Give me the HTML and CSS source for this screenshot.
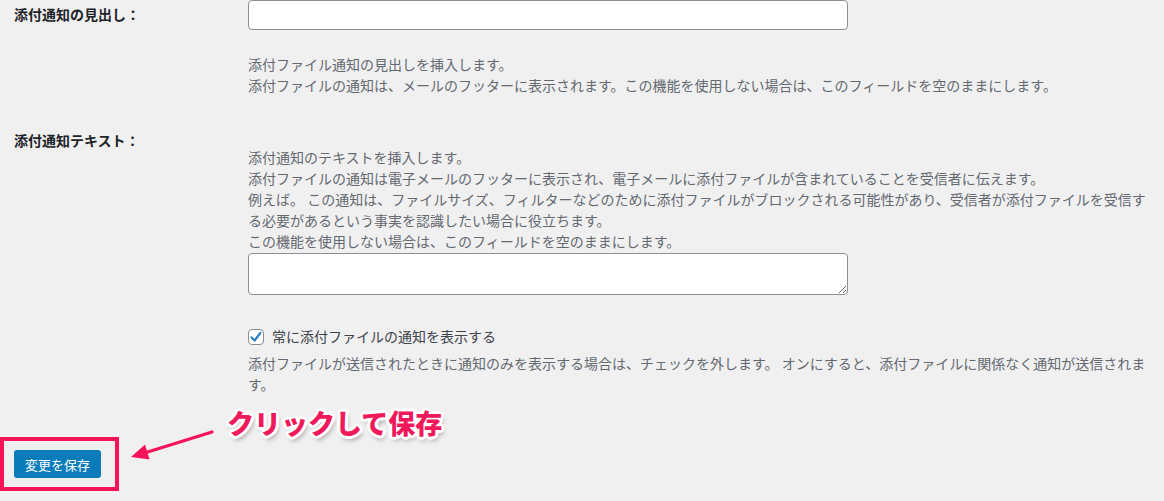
FILE: index.html
```html
<!DOCTYPE html>
<html lang="ja">
<head>
  <meta charset="UTF-8" />
  <title>添付通知の設定</title>
  <meta name="viewport" content="width=device-width, initial-scale=1" />
  <link rel="stylesheet" href="styles.css">
</head>
<body>

  <form class="settings">
    <div class="row row-heading">
      <div class="th">添付通知の見出し：</div>
      <div class="td">
        <input type="text" class="text-input" />
        <p class="description">
          添付ファイル通知の見出しを挿入します。<br>
          添付ファイルの通知は、メールのフッターに表示されます。この機能を使用しない場合は、このフィールドを空のままにします。
        </p>
      </div>
    </div>

    <div class="row row-text">
      <div class="th">添付通知テキスト：</div>
      <div class="td">
        <p class="description">
          添付通知のテキストを挿入します。<br>
          添付ファイルの通知は電子メールのフッターに表示され、電子メールに添付ファイルが含まれていることを受信者に伝えます。<br>
          例えば。 この通知は、ファイルサイズ、フィルターなどのために添付ファイルがブロックされる可能性があり、受信者が添付ファイルを受信する必要があるという事実を認識したい場合に役立ちます。<br>
          この機能を使用しない場合は、このフィールドを空のままにします。
        </p>
        <textarea class="text-area"></textarea>

        <label class="check">
          <span class="box">
            <svg width="14" height="14" viewBox="0 0 14 14"><path d="M2.6 7.4 L5.6 10.6 L11.4 2.8" fill="none" stroke="#2a7ec2" stroke-width="2.2" stroke-linecap="round" stroke-linejoin="round"/></svg>
          </span>
          常に添付ファイルの通知を表示する
        </label>
        <p class="description">添付ファイルが送信されたときに通知のみを表示する場合は、チェックを外します。 オンにすると、添付ファイルに関係なく通知が送信されます。</p>
      </div>
    </div>

    <div class="submit">
      <button type="button" class="button-primary">変更を保存</button>
    </div>
  </form>

  <!-- annotation overlay -->
  <div class="mark-box"></div>
  <svg class="mark-arrow" width="1164" height="501" viewBox="0 0 1164 501">
    <line x1="212" y1="432" x2="146" y2="452.5" stroke="#f5145a" stroke-width="3.2" stroke-linecap="round"/>
    <polygon points="131,457 149.6,459.6 145,444.6" fill="#f5145a"/>
  </svg>
  <div class="mark-text">クリックして保存</div>

</body>
</html>
```

FILE: styles.css
```css
body {
  margin: 0;
  background: #f0f0f1;
  color: #1d2327;
  font-family: "Noto Sans CJK JP", "Liberation Sans", sans-serif;
  font-size: 14px;
  line-height: 21px;
  position: relative;
  height: 501px;
  overflow: hidden;
}

.settings {
  padding-left: 14px;
}

.row {
  display: flex;
}

.th {
  width: 234px;
  flex-shrink: 0;
  font-weight: bold;
}

.td {
  width: 908px;
}

.row-heading .th {
  padding-top: 4px;
}

.row-text {
  margin-top: 34px;
}

.row-text .td {
  padding-top: 17px;
}

.text-input {
  display: block;
  box-sizing: border-box;
  width: 600px;
  height: 30px;
  margin: 0;
  border: 1px solid #8c8f94;
  border-radius: 4px;
  background: #fff;
}

.description {
  margin: 0;
  color: #646970;
}

.row-heading .description {
  margin-top: 24px;
}

.text-area {
  display: block;
  box-sizing: border-box;
  width: 600px;
  height: 42px;
  margin: 1px 0 0;
  border: 1px solid #8c8f94;
  border-radius: 4px;
  background: #fff;
}

.check {
  display: flex;
  align-items: center;
  gap: 8px;
  margin-top: 31px;
  color: #3c434a;
}

.box {
  box-sizing: border-box;
  width: 16px;
  height: 16px;
  border: 1px solid #8c8f94;
  border-radius: 4px;
  background: #fff;
  display: flex;
  align-items: center;
  justify-content: center;
}

.check + .description {
  margin-top: 6px;
}

.submit {
  margin-top: 55px;
}

.button-primary {
  height: 28px;
  padding: 0 11px;
  border: none;
  border-radius: 3px;
  background: #0a7cba;
  color: #fff;
  font-family: inherit;
  font-size: 13px;
}

/* annotation */
.mark-box {
  position: absolute;
  left: 0;
  top: 437px;
  width: 111px;
  height: 46px;
  border: 4px solid #f7135a;
}

.mark-arrow {
  position: absolute;
  left: 0;
  top: 0;
}

.mark-text {
  position: absolute;
  left: 227px;
  top: 404px;
  font-size: 27px;
  line-height: 38px;
  font-weight: 900;
  color: #f0195a;
  text-shadow:
    2px 0 0 #fff, -2px 0 0 #fff, 0 2px 0 #fff, 0 -2px 0 #fff,
    2px 2px 0 #fff, -2px -2px 0 #fff, 2px -2px 0 #fff, -2px 2px 0 #fff,
    3px 0 0 #fff, -3px 0 0 #fff, 0 3px 0 #fff, 0 -3px 0 #fff,
    2px 4px 5px rgba(0, 0, 0, 0.35);
}
```
